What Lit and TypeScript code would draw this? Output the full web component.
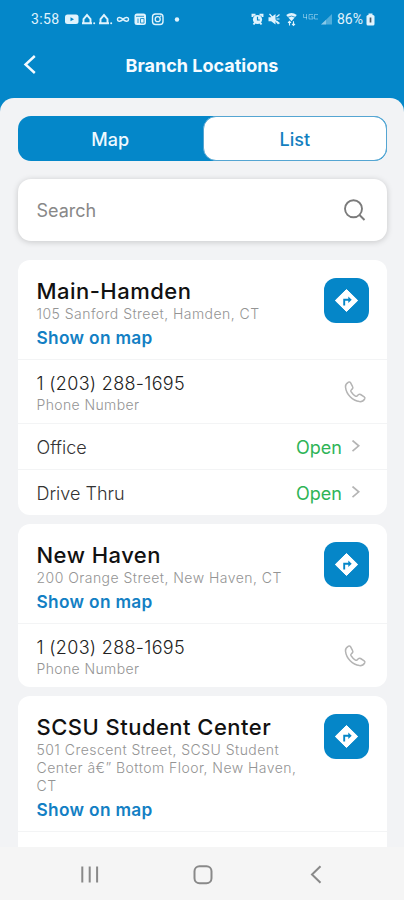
import { LitElement, html, css, svg } from "lit";
import { customElement, property } from "lit/decorators.js";

interface Branch {
  name: string;
  address: string[];
  phone?: string;
  services: { label: string; status: string }[];
}

const BRANCHES: Branch[] = [
  {
    name: "Main-Hamden",
    address: ["105 Sanford Street, Hamden, CT"],
    phone: "1 (203) 288-1695",
    services: [
      { label: "Office", status: "Open" },
      { label: "Drive Thru", status: "Open" },
    ],
  },
  {
    name: "New Haven",
    address: ["200 Orange Street, New Haven, CT"],
    phone: "1 (203) 288-1695",
    services: [],
  },
  {
    name: "SCSU Student Center",
    address: ["501 Crescent Street, SCSU Student", "Center â€” Bottom Floor, New Haven,", "CT"],
    services: [],
  },
];

@customElement("status-bar")
export class StatusBar extends LitElement {
  static styles = css`
    :host { display: flex; justify-content: space-between; align-items: center; height: 38px; padding: 0 28px 0 31px; color: #e0f3fd; font: 400 14px/20px Roboto, sans-serif; }
    .group { display: flex; align-items: center; }
    .time { width: 33px; letter-spacing: 0.4px; }
    .pct { width: 28px; letter-spacing: 0; }
    svg { display: block; }
  `;
  render() {
    const house = (x: number) => svg`<path d="M${x} 14.300h10M${x + 1.5} 14.300V10L${x + 5} 6l3.500 4v4.300" fill="none" stroke="currentColor" stroke-width="1.900"/><circle cx="${x + 12.2}" cy="14.300" r="1"/>`;
    return html`
      <div class="group">
        <span class="time">3:58</span>
        <svg width="118" height="20" viewBox="64 0 118 20" fill="currentColor">
          <rect x="65" y="5.500" width="13.500" height="9.500" rx="2.500"/>
          <path d="M70.500 8.200v4l3.500-2z" fill="#0487c9"/>
          ${house(82)}${house(99)}
          <path d="M123 10.300c-1.500-2-5.500-3-5.500 0s4 2 5.500 0 5.500-3 5.500 0-4 2-5.500 0z" fill="none" stroke="currentColor" stroke-width="1.500"/>
          <rect x="134.500" y="4.500" width="11.500" height="11.500" rx="2.500"/>
          <path d="M136 7.300h8M138 9.500v4.500M140.500 9.500h3.500v4.500h-3.500z" fill="none" stroke="#2b9bd2" stroke-width="1"/>
          <rect x="152.500" y="5" width="10.500" height="10.500" rx="3" fill="none" stroke="currentColor" stroke-width="1.400"/>
          <circle cx="157.700" cy="10.200" r="2.500" fill="none" stroke="currentColor" stroke-width="1.300"/>
          <circle cx="160.700" cy="7.300" r=".7"/>
          <circle cx="177" cy="10.500" r="2.200"/>
        </svg>
      </div>
      <div class="group">
        <svg width="86" height="20" viewBox="250.500 0 86 20" fill="currentColor">
          <circle cx="257" cy="10.500" r="4.600"/><path d="M252 8V5.700h3M262 8V5.700h-3M253 15.500l1.500-2M261 15.500l-1.500-2" stroke="currentColor" stroke-width="1.900" fill="none"/>
          <path d="M257 7.700v3.300h2.300" stroke="#0487c9" stroke-width="1.200" fill="none"/>
          <path d="M268 8.300h2.700L275 5v10.500l-4.300-3.300H268z"/><path d="M276 8l3-2.500M276 12l3 2.500M276 10h3M269 5l9 10" stroke="currentColor" stroke-width="1.200"/>
          <path d="M291 12.300L285.700 6q5.300-4 10.600 0z"/><path d="M287.500 8.200q3.500-2.200 7 0" fill="none" stroke="#0487c9" stroke-width=".8"/>
          <path d="M289 16.500v-4M287.500 13.800l1.500-1.500 1.500 1.500M293 12.300v4M291.500 14.900l1.500 1.500 1.500-1.500" stroke="currentColor" fill="none" stroke-width="1.100"/>
          <g opacity=".45" fill="none" stroke="currentColor" stroke-width="1"><path d="M303 5v3.500h3.500M306 5v5.500M312.500 5.500h-4v4.500h4v-2.200h-2M317.500 5.500h-3.500v4.500h3.500"/></g>
          <path d="M331.500 5v10.500H320.500z" opacity=".35"/><path d="M325.500 10.700v4.800H320.500z" opacity=".4"/>
        </svg>
        <span class="pct">86%</span>
        <svg width="11" height="20" viewBox="0 0 11 20"><rect x="1.500" y="6" width="8" height="10.500" rx="1.500" fill="currentColor"/><rect x="3.500" y="4.500" width="4" height="2" fill="currentColor"/><path d="M5.500 8.500v5" stroke="#445b68" stroke-width="1.700"/></svg>
      </div>
    `;
  }
}

@customElement("branch-card")
export class BranchCard extends LitElement {
  @property({ attribute: false }) branch!: Branch;
  static styles = css`
    :host { display: block; flex: none; background: #fff; border-radius: 12px; overflow: hidden; }
    .row { display: flex; justify-content: space-between; align-items: center; box-sizing: border-box; height: 46px; padding: 1px 26px 0 18.500px; border-top: 1px solid #f3f4f5; font-size: 18px; color: #333; }
    .head { display: flex; justify-content: space-between; padding: 18px 18px 9px 18.500px; }
    .name { font-size: 22px; line-height: 27px; font-weight: 550; color: #111; letter-spacing: 0.47px; white-space: nowrap; }
    .addr { font-size: 14px; line-height: 18px; color: #949494; font-weight: 330; letter-spacing: 0.46px; white-space: nowrap; }
    .link { padding-top: 2px; font-size: 17.300px; line-height: 25px; height: 25px; font-weight: 600; color: #137fc4; letter-spacing: 0.32px; }
    .text { width: 270px; }
    .go { flex: none; width: 45px; height: 45px; display: block; }
    .phone { height: 64px; padding-right: 20px; padding-top: 0; }
    .number { padding-top: 2px; font-size: 18px; line-height: 24px; font-weight: 330; color: #222; letter-spacing: 0.31px; }
    .caption { font-size: 14px; line-height: 18px; color: #949494; font-weight: 330; letter-spacing: 0.38px; }
    .label { font-weight: 330; }
    .status { display: flex; align-items: center; gap: 9px; color: #2fb457; font-weight: 400; }
    .rest { height: 64px; border-top: 1px solid #f3f4f5; }
    svg { display: block; }
  `;
  render() {
    const b = this.branch;
    return html`
      <div class="head">
        <div class="text">
          <div class="name">${b.name}</div>
          ${b.address.map((line) => html`<div class="addr">${line}</div>`)}
          <div class="link">Show on map</div>
        </div>
        <svg class="go" viewBox="0 0 45 45">
          <rect width="45" height="45" rx="12" fill="#0586c8"/>
          <path d="M22.500 11.500L33.700 22.500 22.500 33.500 11.300 22.500z" fill="#fff" stroke="#fff" stroke-width="1" stroke-linejoin="round"/>
          <path d="M20.200 27.500v-5.800h5" fill="none" stroke="#0586c8" stroke-width="1.900"/><path d="M24.300 18.500l3.400 3.200-3.400 3.200z" fill="#0586c8"/>
        </svg>
      </div>
      ${b.phone
        ? html`<div class="row phone">
            <div><div class="number">${b.phone}</div><div class="caption">Phone Number</div></div>
            <svg width="24" height="24" viewBox="0 0 24 24" fill="none" stroke="#b4b4b4" stroke-width="1.500" stroke-linejoin="round"><path d="M5.500 2.200C3.500 3.400 2.200 5 2.500 7.200 3.300 14.500 9.500 20.800 16.500 21.600c2.300.2 4-.7 5.200-2.800.4-.8.200-1.500-.5-2l-3.600-2.300c-.8-.5-1.600-.4-2.300.3l-1.200 1.200c-.6.500-1.100.4-1.700.1-1.800-1.100-3.300-2.600-4.400-4.400-.3-.6-.4-1.200.2-1.700l1.100-1.100c.7-.7.8-1.500.3-2.300L7.500 2.700c-.5-.8-1.200-.9-2-.5z"/></svg>
          </div>`
        : html`<div class="rest"></div>`}
      ${b.services.map(
        (s) => html`<div class="row">
          <span class="label">${s.label}</span>
          <span class="status">${s.status}<svg width="10" height="14" viewBox="0 0 10 14" fill="none" stroke="#b5b5b5" stroke-width="1.700"><path d="M1.500 0.500L7.700 5.800 1.500 11.100"/></svg></span>
        </div>`
      )}
    `;
  }
}

@customElement("app-root")
export class AppRoot extends LitElement {
  static styles = css`
    :host { display: flex; flex-direction: column; width: 404px; height: 900px; overflow: hidden; background: #0487c9; font-family: Inter, "Liberation Sans", sans-serif; }
    .title { display: grid; grid-template-columns: 60px 1fr 60px; align-items: center; height: 54px; flex: none; padding-bottom: 5.500px; color: #f5fbff; }
    .title h1 { margin: 0; font-size: 18px; font-weight: 680; text-align: center; }
    .back { margin-left: 23px; }
    .panel { flex: 1; min-height: 0; display: flex; flex-direction: column; overflow: hidden; background: #f2f3f5; border-radius: 14px 14px 0 0; padding: 18.500px 17px 0 18px; }
    .tabs { flex: none; display: grid; grid-template-columns: 1fr 1fr; height: 45px; box-sizing: border-box; border-radius: 13px; background: #0487c9; font-size: 18px; font-weight: 550; }
    .tab { display: flex; align-items: center; justify-content: center; padding-top: 1px; color: #eff9ff; }
    .tab.on { background: #fff; color: #137fc0; border: 1px solid #55a5d2; border-radius: 13px; }
    .search { flex: none; margin-top: 18px; height: 62px; box-sizing: border-box; display: flex; align-items: center; justify-content: space-between; padding: 1px 20px 0 18.500px; background: #fff; border-radius: 13px; box-shadow: 0 1px 6px rgba(0,0,0,.18); color: #888; font-size: 18px; }
    .list { display: flex; flex-direction: column; gap: 9px; margin-top: 19px; }
    .nav { flex: none; height: 53px; display: flex; background: #f5f5f5; }
    svg { display: block; }
  `;
  render() {
    return html`
      <status-bar></status-bar>
      <div class="title">
        <svg class="back" width="14" height="22" viewBox="0 0 14 22" fill="none" stroke="currentColor" stroke-width="2.400"><path d="M11.800 2L2.500 10.500l9.300 8.500"/></svg>
        <h1>Branch Locations</h1>
      </div>
      <div class="panel">
        <div class="tabs"><div class="tab">Map</div><div class="tab on">List</div></div>
        <div class="search">
          <span>Search</span>
          <svg width="24" height="24" viewBox="0 0 24 24" fill="none" stroke="#7b7b7b" stroke-width="1.900"><circle cx="10.500" cy="9.800" r="8.500"/><path d="M16.500 16l5 5"/></svg>
        </div>
        <div class="list">${BRANCHES.map((b) => html`<branch-card .branch=${b}></branch-card>`)}</div>
      </div>
      <div class="nav">
        <svg width="404" height="53" viewBox="0 0 404 53" fill="none" stroke="#898989" stroke-width="2"><path d="M82.300 19.500v16M89.700 19.500v16M97.100 19.500v16"/><rect x="194.500" y="19.300" width="17" height="17" rx="5"/><path d="M320.500 19.300l-8.500 8.200 8.500 8.200"/></svg>
      </div>
    `;
  }
}
